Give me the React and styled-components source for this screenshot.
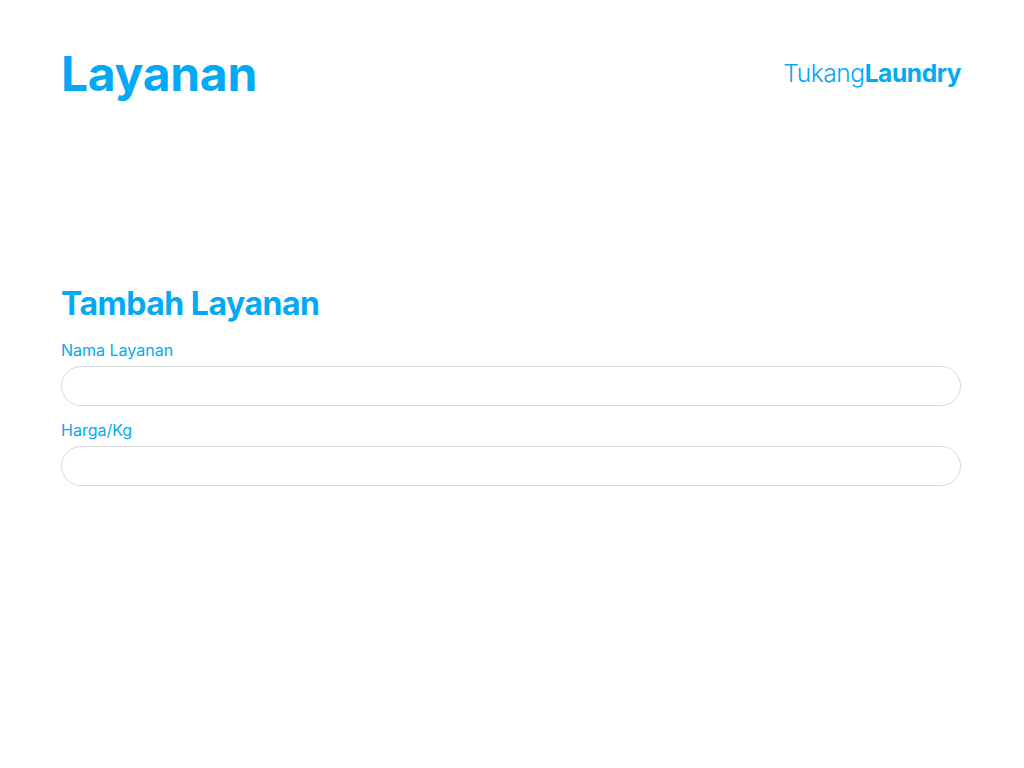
import styled, { createGlobalStyle } from "styled-components";

const GlobalStyle = createGlobalStyle`
  body {
    margin: 0;
    background: #ffffff;
    font-family: Inter, "Noto Sans", sans-serif;
  }
`;

function App() {
  return (
    <>
      <GlobalStyle />
      <Page>
        <Header>
          <Title>Layanan</Title>
          <Brand>
            Tukang<strong>Laundry</strong>
          </Brand>
        </Header>
        <Form>
          <FormTitle>Tambah Layanan</FormTitle>
          <Field>
            <Label htmlFor="nama">Nama Layanan</Label>
            <Input id="nama" type="text" />
          </Field>
          <Field>
            <Label htmlFor="harga">Harga/Kg</Label>
            <Input id="harga" type="text" />
          </Field>
        </Form>
      </Page>
    </>
  );
}

export default App;

const Page = styled.div`
  width: 900px;
  margin-left: calc(50% - 451px);
  color: #03a9f4;
`;

const Header = styled.header`
  display: flex;
  justify-content: space-between;
  align-items: center;
  padding-top: 44px;
`;

const Title = styled.h1`
  margin: 0;
  font-size: 48px;
  line-height: 60px;
  font-weight: 700;
  letter-spacing: -0.3px;
`;

const Brand = styled.div`
  font-size: 24.5px;
  font-weight: 300;
  letter-spacing: -0.4px;
  margin-top: -2px;

  strong {
    font-weight: 700;
  }
`;

const Form = styled.form`
  display: flex;
  flex-direction: column;
  margin-top: 180px;
`;

const FormTitle = styled.h2`
  margin: 0 0 16px;
  font-size: 32px;
  line-height: 40px;
  font-weight: 700;
  letter-spacing: -0.5px;
`;

const Field = styled.div`
  display: flex;
  flex-direction: column;
  gap: 6px;
  margin-bottom: 14px;
`;

const Label = styled.label`
  font-size: 16px;
  line-height: 20px;
  font-weight: 400;
`;

const Input = styled.input`
  box-sizing: border-box;
  height: 40px;
  border: 1px solid #d9d9d9;
  border-radius: 20px;
  padding: 0 18px;
  font-size: 16px;
  outline: none;
`;
